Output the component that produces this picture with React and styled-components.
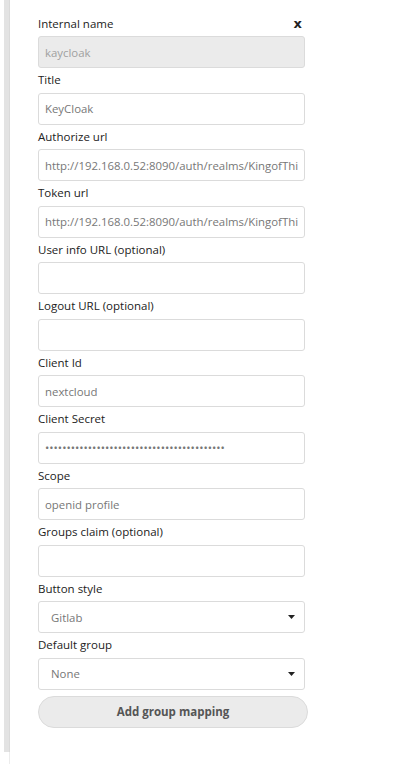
import React from "react";
import styled, { createGlobalStyle } from "styled-components";

const Global = createGlobalStyle`
  html, body { margin: 0; padding: 0; background: #fff; }
  body { font-family: "Open Sans", "Noto Sans", sans-serif; }
  * { box-sizing: border-box; }
`;

const Page = styled.div`
  display: flex;
  min-height: 764px;
  padding-left: 4px;
`;

const Rail = styled.div`
  width: 6px;
  display: flex;
  flex-direction: column;
`;

const RailBar = styled.div`
  height: 752px;
  background: #e3e3e3;
  border-right: 1px solid #dadada;
`;

const RailTail = styled.div`
  flex: 1;
  margin-left: 5px;
  width: 1px;
  background: #ececec;
`;

const Form = styled.div`
  width: 271px;
  margin-left: 28px;
  padding-top: 11.5px;
  display: flex;
  flex-direction: column;
`;

const LabelRow = styled.div`
  display: flex;
  justify-content: space-between;
  align-items: center;
  height: 24.5px;
  width: 267px;
`;

const Label = styled.label`
  font-size: 11.5px;
  color: #222;
  line-height: 24.5px;
`;

const Close = styled.span`
  font-family: "DejaVu Sans", sans-serif;
  font-weight: bold;
  font-size: 13px;
  color: #222;
  margin-right: 3px;
`;

const Input = styled.input`
  display: block;
  width: 267px;
  height: 32px;
  margin: 0;
  padding: 0 6px;
  border: 1px solid #dbdbdb;
  border-radius: 3px;
  background: ${(p) => (p.disabled ? "#ebebeb" : "#fff")};
  color: ${(p) => (p.disabled ? "#a0a0a0" : "#777")};
  font-family: inherit;
  font-size: 11.4px;
  outline: none;
  -webkit-text-fill-color: ${(p) => (p.disabled ? "#a0a0a0" : "#777")};
  opacity: 1;
`;

const Select = styled.div`
  display: flex;
  align-items: center;
  justify-content: space-between;
  width: 267px;
  height: 32px;
  padding: 0 9px 0 12px;
  border: 1px solid #dbdbdb;
  border-radius: 3px;
  background: #fff;
  color: #777;
  font-size: 11.4px;
`;

const Button = styled.button`
  margin-top: 6px;
  width: 270px;
  height: 32px;
  border: 1px solid #dbdbdb;
  border-radius: 16px;
  background: #ebebeb;
  color: #555;
  font-family: inherit;
  font-weight: bold;
  font-size: 11.5px;
  padding: 0;
`;

const Caret = () => (
  <svg width="7" height="4" viewBox="0 0 7 4">
    <path d="M0 0 L7 0 L3.5 4 Z" fill="#222" />
  </svg>
);

const fields = [
  { label: "Title", value: "KeyCloak" },
  { label: "Authorize url", value: "http://192.168.0.52:8090/auth/realms/KingofThings/protocol/openid-connect/auth" },
  { label: "Token url", value: "http://192.168.0.52:8090/auth/realms/KingofThings/protocol/openid-connect/token" },
  { label: "User info URL (optional)", value: "" },
  { label: "Logout URL (optional)", value: "" },
  { label: "Client Id", value: "nextcloud" },
  { label: "Client Secret", value: "abcdefghijabcdefghijabcdefghijabcdefghijab", type: "password" },
  { label: "Scope", value: "openid profile" },
  { label: "Groups claim (optional)", value: "" },
];

export default function App() {
  return (
    <>
      <Global />
      <Page>
        <Rail>
          <RailBar />
          <RailTail />
        </Rail>
        <Form>
          <LabelRow>
            <Label>Internal name</Label>
            <Close>x</Close>
          </LabelRow>
          <Input disabled value="kaycloak" readOnly />
          {fields.map((f) => (
            <React.Fragment key={f.label}>
              <LabelRow>
                <Label>{f.label}</Label>
              </LabelRow>
              <Input type={f.type || "text"} value={f.value} readOnly />
            </React.Fragment>
          ))}
          <LabelRow>
            <Label>Button style</Label>
          </LabelRow>
          <Select>
            <span>Gitlab</span>
            <Caret />
          </Select>
          <LabelRow>
            <Label>Default group</Label>
          </LabelRow>
          <Select>
            <span>None</span>
            <Caret />
          </Select>
          <Button>Add group mapping</Button>
        </Form>
      </Page>
    </>
  );
}
